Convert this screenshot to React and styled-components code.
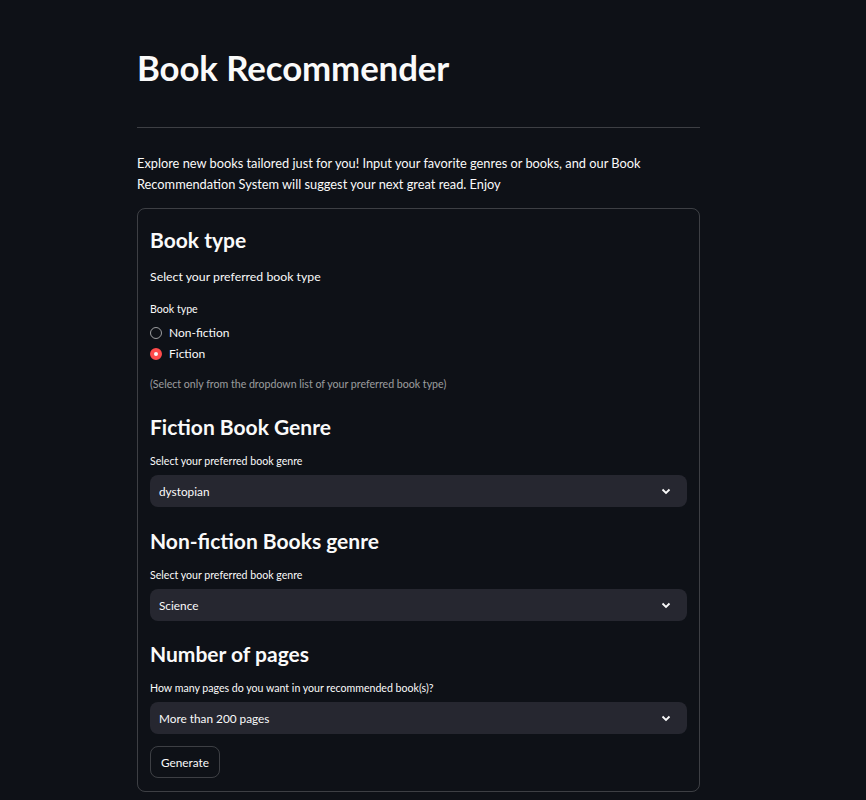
import React, { useState } from 'react';
import styled, { createGlobalStyle } from 'styled-components';

const GlobalStyle = createGlobalStyle`
  html, body {
    margin: 0;
    padding: 0;
    background: #0e1117;
    color: #fafafa;
    font-family: Lato, "Noto Sans", sans-serif;
  }
`

const Page = styled.main`
  min-height: 800px;
  padding: 48px 0 0 137px;
  box-sizing: border-box;
`

const Column = styled.div`
  width: 563px;
`

const Title = styled.h1`
  margin: 0;
  font-size: 34.8px;
  font-weight: 700;
  line-height: 40px;
  letter-spacing: -0.1px;
`

const Divider = styled.hr`
  margin: 39px 0 0;
  border: none;
  border-top: 1px solid rgba(250, 250, 250, 0.2);
`

const Intro = styled.p`
  margin: 25px 0 0;
  font-size: 12.8px;
  line-height: 21px;
`

const Card = styled.section`
  margin-top: 13px;
  border: 1px solid rgba(250, 250, 250, 0.2);
  border-radius: 8px;
  padding: 16px 12px 13px;
  display: flex;
  flex-direction: column;
`

const Heading = styled.h3`
  margin: ${p => p.$top || 0}px 0 0;
  font-size: 21px;
  font-weight: 700;
  line-height: 30px;
`

const Text = styled.p`
  margin: 12px 0 0;
  font-size: 12.3px;
  line-height: 20px;
`

const Label = styled.div`
  margin-top: ${p => p.$top}px;
  font-size: 10.6px;
  line-height: 16px;
`

const RadioGroup = styled.div`
  margin-top: 8px;
  display: flex;
  flex-direction: column;
  gap: 5px;
`

const RadioRow = styled.label`
  display: flex;
  align-items: center;
  gap: 7px;
  font-size: 12px;
  line-height: 16px;
  cursor: pointer;
`

const Dot = styled.span`
  width: 12px;
  height: 12px;
  box-sizing: border-box;
  border-radius: 50%;
  border: ${p => (p.$on ? '4px solid #ff4b4b' : '1px solid rgba(250, 250, 250, 0.6)')};
  background: ${p => (p.$on ? '#fafafa' : 'transparent')};
`

const Caption = styled.div`
  margin-top: 14px;
  font-size: 10.6px;
  line-height: 16px;
  color: rgba(250, 250, 250, 0.6);
`

const Select = styled.div`
  margin-top: 6px;
  height: 32px;
  border-radius: 8px;
  background: #262730;
  display: flex;
  align-items: center;
  justify-content: space-between;
  padding: 0 16px 0 9px;
  font-size: 11.8px;
`

const Button = styled.button`
  margin-top: 12px;
  align-self: flex-start;
  height: 32px;
  padding: 0 10px;
  background: transparent;
  color: #fafafa;
  border: 1px solid rgba(250, 250, 250, 0.2);
  border-radius: 8px;
  font-family: inherit;
  font-size: 11.8px;
`

const Chevron = () => (
  <svg width="10" height="7" viewBox="0 0 10 7">
    <path d="M1.5 1.5 L5 5 L8.5 1.5" fill="none" stroke="#fafafa" strokeWidth="1.8" />
  </svg>
)

const Dropdown = ({ value }) => (
  <Select>
    <span>{value}</span>
    <Chevron />
  </Select>
)

const App = () => {
  const [type, setType] = useState('Fiction');

  return (
    <Page>
      <GlobalStyle />
      <Column>
        <Title>Book Recommender</Title>
        <Divider />
        <Intro>
          Explore new books tailored just for you! Input your favorite genres or books, and our Book
          Recommendation System will suggest your next great read. Enjoy
        </Intro>
        <Card>
          <Heading>Book type</Heading>
          <Text>Select your preferred book type</Text>
          <Label $top={14}>Book type</Label>
          <RadioGroup>
            {['Non-fiction', 'Fiction'].map(opt => (
              <RadioRow key={opt} onClick={() => setType(opt)}>
                <Dot $on={type === opt} />
                {opt}
              </RadioRow>
            ))}
          </RadioGroup>
          <Caption>(Select only from the dropdown list of your preferred book type)</Caption>
          <Heading $top={20}>Fiction Book Genre</Heading>
          <Label $top={11}>Select your preferred book genre</Label>
          <Dropdown value="dystopian" />
          <Heading $top={19}>Non-fiction Books genre</Heading>
          <Label $top={11}>Select your preferred book genre</Label>
          <Dropdown value="Science" />
          <Heading $top={18}>Number of pages</Heading>
          <Label $top={11}>How many pages do you want in your recommended book(s)?</Label>
          <Dropdown value="More than 200 pages" />
          <Button>Generate</Button>
        </Card>
      </Column>
    </Page>
  )
}

export default App;
